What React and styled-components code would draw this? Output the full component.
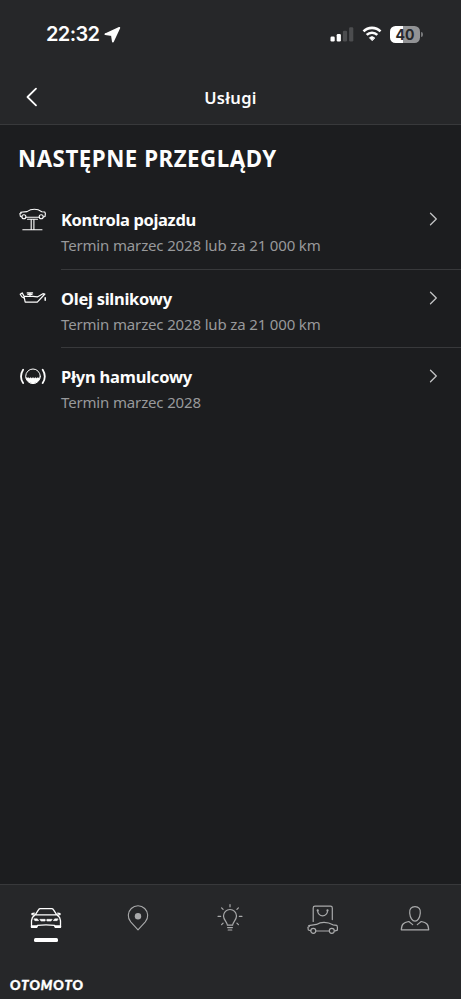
import React from 'react'
import styled, { createGlobalStyle, ThemeProvider } from 'styled-components'

const theme = {
  colors: {
    bar: '#262729',
    page: '#1c1d1f',
    line: '#38393b',
    text: '#fdfdfd',
    muted: '#98999b',
  },
}

const GlobalStyle = createGlobalStyle`
  * {
    box-sizing: border-box;
  }
  body {
    margin: 0;
    background: #1c1d1f;
    font-family: 'Noto Sans', 'Open Sans', sans-serif;
  }
  svg {
    display: block;
    fill: none;
    stroke: currentColor;
    stroke-linecap: round;
    stroke-linejoin: round;
  }
`

const Screen = styled.div`
  width: 100%;
  height: 999px;
  display: flex;
  flex-direction: column;
  overflow: hidden;
  color: ${({ theme }) => theme.colors.text};
  background: ${({ theme }) => theme.colors.page};
`
const Top = styled.header`
  height: 125px;
  flex: none;
  background: ${({ theme }) => theme.colors.bar};
  border-bottom: 1px solid ${({ theme }) => theme.colors.line};
`
const StatusBar = styled.div`
  height: 70px;
  display: flex;
  align-items: center;
  justify-content: space-between;
  padding: 0 38px 2px 46px;
`
const Clock = styled.div`
  display: flex;
  align-items: center;
  gap: 4px;
  font: 600 20px/24px Inter, sans-serif;
  letter-spacing: -0.6px;
`
const Indicators = styled.div`
  display: flex;
  align-items: center;
  gap: 8px;
`
const Battery = styled.div`
  display: flex;
  align-items: center;
  gap: 1px;
`
const BatteryLevel = styled.div`
  width: 30px;
  height: 17px;
  border-radius: 5.5px;
  text-align: center;
  font: 700 14px/17px Inter, sans-serif;
  color: #262729;
  background: linear-gradient(90deg, #fff 42%, #929395 42%);
`
const BatteryTip = styled.div`
  width: 2px;
  height: 5px;
  border-radius: 0 2px 2px 0;
  background: #77787a;
`
const TitleBar = styled.div`
  height: 54px;
  display: grid;
  grid-template-columns: 64px 1fr 64px;
  align-items: center;
`
const BackButton = styled.button`
  padding: 0 0 0 25px;
  border: 0;
  background: none;
  color: inherit;
`
const Title = styled.h1`
  margin: 2px 0 0;
  text-align: center;
  font-size: 16.5px;
  line-height: 24px;
  font-weight: 600;
  letter-spacing: 0.3px;
`
const Main = styled.main`
  flex: 1;
`
const Heading = styled.h2`
  margin: 19px 0 0 18px;
  font-size: 22.3px;
  line-height: 30px;
  font-weight: 700;
  letter-spacing: 0.52px;
  white-space: nowrap;
`
const List = styled.div`
  padding-top: 17px;
`
const Row = styled.div`
  height: 78.7px;
  display: flex;
  padding-left: 19px;
`
const RowIcon = styled.div`
  width: 42px;
  padding-top: 15.6px;
`
const RowBody = styled.div`
  flex: 1;
  display: flex;
  justify-content: space-between;
  padding: 16px 23px 0 0;
  border-bottom: 1px solid ${({ theme, $last }) => ($last ? 'transparent' : theme.colors.line)};
`
const RowTitle = styled.div`
  font-size: 16.5px;
  line-height: 26px;
  font-weight: 700;
  letter-spacing: ${({ $spacing }) => $spacing}px;
`
const RowText = styled.div`
  font-size: 15px;
  line-height: 25px;
  letter-spacing: -0.15px;
  white-space: nowrap;
  color: ${({ theme }) => theme.colors.muted};
`
const Chevron = styled.div`
  padding-top: 3px;
  color: #c3c4c5;
`
const Nav = styled.nav`
  height: 115px;
  flex: none;
  display: flex;
  flex-direction: column;
  justify-content: space-between;
  background: ${({ theme }) => theme.colors.bar};
  border-top: 1px solid ${({ theme }) => theme.colors.line};
`
const Tabs = styled.div`
  display: grid;
  grid-template-columns: repeat(5, 1fr);
  padding-top: 18px;
`
const Tab = styled.div`
  display: flex;
  flex-direction: column;
  align-items: center;
  gap: 3px;
  color: ${({ $active }) => ($active ? '#fff' : '#a9aaab')};
`
const ActiveMark = styled.div`
  width: 24px;
  height: 4px;
  border-radius: 1.5px;
  background: #fff;
`
const Brand = styled.div`
  padding: 0 0 5px 10px;
  font: 900 13px/18px Lato, sans-serif;
  letter-spacing: 0.8px;
  color: #fff;
  -webkit-text-stroke: 0.4px #fff;
`

const LocationArrow = () => (
  <svg width='17' height='17' viewBox='0 0 17 17'>
    <path d='M15.3 1.8 1.3 8.2l6.6.9 1 6.6z' fill='currentColor' strokeWidth='1.8' />
  </svg>
)

const Signal = () => (
  <svg width='24' height='15' viewBox='0 0 24 15' style={{ stroke: 'none' }}>
    <rect x='0.5' y='9.5' width='4.2' height='5' rx='1.2' fill='#fff' />
    <rect x='6.7' y='7' width='4.2' height='7.5' rx='1.2' fill='#fff' />
    <rect x='12.9' y='3.7' width='4.2' height='10.8' rx='1.2' fill='#4c4d4f' />
    <rect x='19.1' y='0.3' width='4.2' height='14.2' rx='1.2' fill='#4c4d4f' />
  </svg>
)

const Wifi = () => (
  <svg width='20' height='16' viewBox='0 0 20 16' strokeWidth='2.6'>
    <path d='M1.5 5.4a12 12 0 0 1 17 0M4.7 8.9a7.5 7.5 0 0 1 10.6 0' strokeLinecap='butt' />
    <path d='M10 14.5 7.4 11.8a3.8 3.8 0 0 1 5.2 0z' fill='currentColor' strokeWidth='0.8' />
  </svg>
)

const LiftIcon = () => (
  <svg width='28' height='26' viewBox='0 0 28 26' strokeWidth='1.1'>
    <path d='M2.8 9.9 1.4 9.5.9 6.6l1.5-.5-.8-.8 6.4-.7c2.6-1.8 4.4-2.3 7.4-2.3 3.1 0 5.1.9 7.4 2.4l3 .3.6 1.7-.4 2.9-1.6.5M7 10.3h13.1' />
    <circle cx='4.9' cy='9.7' r='2' />
    <circle cx='22.2' cy='9.7' r='2' />
    <path d='M8.5 12.3h10M12.2 12.5v10M14.9 12.5v10M3.8 22.8H23' />
  </svg>
)

const OilIcon = () => (
  <svg width='28' height='26' viewBox='0 0 28 26' strokeWidth='1.2'>
    <path d='M5 11.3h9l4.3.6 5.6-3.2 2 .3-7.6 8.2H6.2zM5 11.3 3.2 7.9 1.2 9.2l1.6 2.6 2.5 1.4M8.2 7.9h5.4M8.8 9.4h4.2M11 8v3' />
    <path d='M26.2 12.8v2.4' strokeWidth='1.5' />
  </svg>
)

const BrakeIcon = () => (
  <svg width='28' height='26' viewBox='0 0 28 26' strokeWidth='1'>
    <circle cx='14' cy='12.3' r='7.3' />
    <path d='M6.8 13.2q1.2 1.6 2.4.3 1.2 1.6 2.4 0 1.2 1.6 2.4 0 1.2 1.6 2.4 0 1.2 1.6 2.4 0 1.2 1.3 2.4-.3A7.3 7.3 0 0 1 6.8 13.2z' fill='currentColor' strokeWidth='0.4' />
    <path d='M4.1 5.8a12.5 12.5 0 0 0 0 13.3M23.7 5.8a12.5 12.5 0 0 1 0 13.3' strokeWidth='1.8' />
  </svg>
)

const CarIcon = () => (
  <svg width='32' height='32' viewBox='0 0 32 32' strokeWidth='1.3'>
    <path d='M5.2 11.8 8.8 6.4Q9.2 5.6 10.2 5.6h11.6q1 0 1.4.8l3.6 5.4M5.2 11.8h21.6M5.2 11.8 2.4 14.5 1.5 17.7v6.6h5.2l.8-2q8.5-.7 17 0l.8 2h5.2v-6.6L29.6 14.5l-2.8-2.7M4.3 10.1 2 10.6v1l2.4.3M27.7 10.1l2.3.5v1l-2.4.3' />
    <path d='M1.9 23.4h4.6M25.5 23.4h4.6' strokeWidth='2.2' />
    <path d='M4.3 15.9h3l1.2 1.7H5.2zM27.7 15.9h-3l-1.2 1.7h3.3zM10.3 16.4h4.8v1.5h-3.8zM21.7 16.4h-4.8v1.5h3.8z' fill='currentColor' strokeWidth='0.8' />
  </svg>
)

const PinIcon = () => (
  <svg width='32' height='32' viewBox='0 0 32 32' strokeWidth='1.1'>
    <path d='M16 26.8 8.7 18.9A9.7 9.7 0 1 1 23.3 18.9z' />
    <circle cx='16' cy='13.3' r='3.2' fill='currentColor' strokeWidth='0' />
  </svg>
)

const BulbIcon = () => (
  <svg width='32' height='32' viewBox='0 0 32 32' strokeWidth='1.2'>
    <path d='M13.4 22.2c-.3-3.4-3.9-5.2-3.9-9.2a6.5 6.5 0 0 1 13 0c0 4-3.6 5.8-3.9 9.2zM13.6 24.6h4.8M14.2 27h3.6' />
    <path d='M16 1.5v2.3M4 13.3h2.7M25.3 13.3H28M7.6 4.9l1.5 1.5M24.4 4.9l-1.5 1.5M7.6 21.7l1.5-1.5M24.4 21.7l-1.5-1.5' />
  </svg>
)

const ShopIcon = () => (
  <svg width='32' height='32' viewBox='0 0 32 32' strokeWidth='1.2'>
    <path d='M6.2 18.4V5q0-1.8 1.8-1.8h15.5q1.8 0 1.8 1.8v11.6M10.7 7.4v.5a4.9 4.9 0 0 0 9.8 0v-.5' />
    <circle cx='10.7' cy='7.4' r='.5' />
    <circle cx='20.5' cy='7.4' r='.5' />
    <path d='M3.7 27.8 1.3 27l-.4-2.8 1.6-.7-.8-.9 7.8-1.2c2.4-1.5 4.1-2.1 7.5-2.1 3.7 0 6 .7 8.9 2.5l3.9.5.6 1.8v3.1l-2.2.6M8.9 28h13.2' />
    <circle cx='6.3' cy='27.8' r='2.5' />
    <circle cx='24.8' cy='27.8' r='2.5' />
  </svg>
)

const ProfileIcon = () => (
  <svg width='32' height='32' viewBox='0 0 32 32' strokeWidth='1.2'>
    <path d='M16 3.6c3.9 0 5.7 2.7 5.3 6.5-.4 4.5-2.6 8.1-5.3 8.1s-4.9-3.6-5.3-8.1C10.3 6.3 12.1 3.6 16 3.6z' />
    <path d='M13.7 21.6 9.8 18.5c-4.7 1.2-7.3 1.8-7.5 8.3h27.4c-.2-6.5-2.8-7.1-7.5-8.3l-3.9 3.1' />
  </svg>
)

const services = [
  { title: 'Kontrola pojazdu', text: 'Termin marzec 2028 lub za 21 000 km', Icon: LiftIcon, spacing: -0.35 },
  { title: 'Olej silnikowy', text: 'Termin marzec 2028 lub za 21 000 km', Icon: OilIcon, spacing: -0.27 },
  { title: 'Płyn hamulcowy', text: 'Termin marzec 2028', Icon: BrakeIcon, spacing: -0.22 },
]

const tabs = [CarIcon, PinIcon, BulbIcon, ShopIcon, ProfileIcon]

const App = () => {
  return (
    <ThemeProvider theme={theme}>
      <GlobalStyle />
      <Screen>
        <Top>
          <StatusBar>
            <Clock>
              22:32
              <LocationArrow />
            </Clock>
            <Indicators>
              <Signal />
              <Wifi />
              <Battery>
                <BatteryLevel>40</BatteryLevel>
                <BatteryTip />
              </Battery>
            </Indicators>
          </StatusBar>
          <TitleBar>
            <BackButton aria-label='Wstecz'>
              <svg width='13' height='20' viewBox='0 0 13 20' strokeWidth='1.8'>
                <path d='M11 1.7 2.5 10l8.5 8.3' />
              </svg>
            </BackButton>
            <Title>Usługi</Title>
          </TitleBar>
        </Top>
        <Main>
          <Heading>NASTĘPNE PRZEGLĄDY</Heading>
          <List>
            {services.map(({ title, text, Icon, spacing }, i) => (
              <Row key={title}>
                <RowIcon>
                  <Icon />
                </RowIcon>
                <RowBody $last={i === services.length - 1}>
                  <div>
                    <RowTitle $spacing={spacing}>{title}</RowTitle>
                    <RowText>{text}</RowText>
                  </div>
                  <Chevron>
                    <svg width='9' height='18' viewBox='0 0 9 18' strokeWidth='1.3'>
                      <path d='m1.5 3.3 5.8 5.7-5.8 5.7' />
                    </svg>
                  </Chevron>
                </RowBody>
              </Row>
            ))}
          </List>
        </Main>
        <Nav>
          <Tabs>
            {tabs.map((Icon, i) => (
              <Tab key={i} $active={i === 0}>
                <Icon />
                {i === 0 && <ActiveMark />}
              </Tab>
            ))}
          </Tabs>
          <Brand>
            O<i>T</i>O<i>M</i>O<i>T</i>O
          </Brand>
        </Nav>
      </Screen>
    </ThemeProvider>
  )
}

export default App
